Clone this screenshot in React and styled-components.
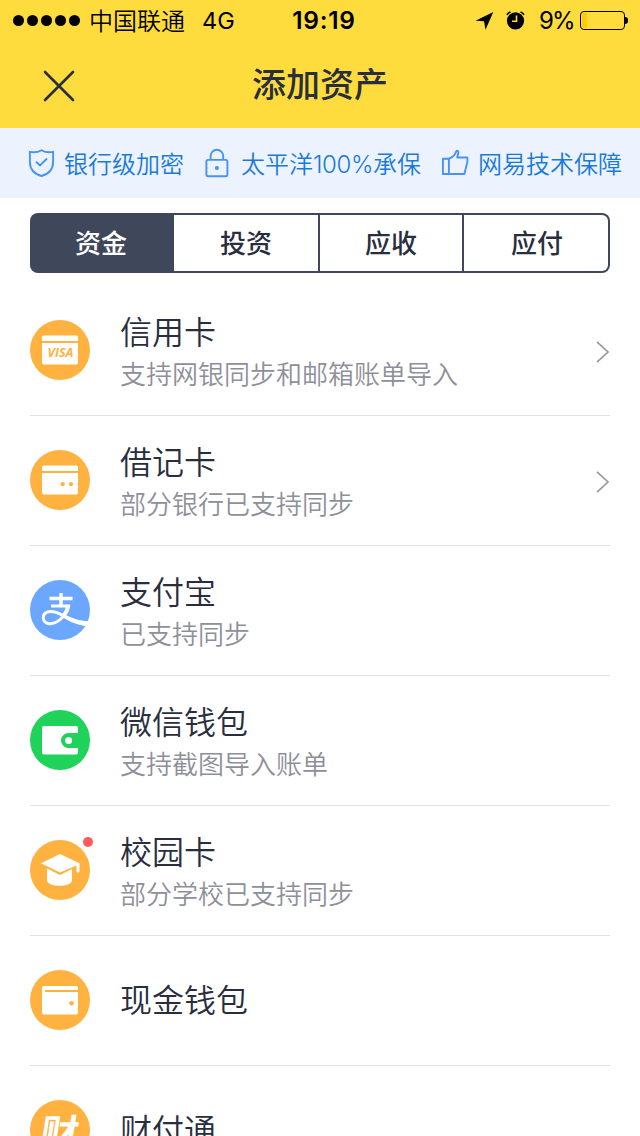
import React from "react";
import styled, { createGlobalStyle } from "styled-components";

const GlobalStyle = createGlobalStyle`
  * { box-sizing: border-box; }
  body {
    margin: 0;
    background: #fff;
    color: #292e3e;
    font-family: "Noto Sans CJK SC", sans-serif;
  }
  svg { display: block; flex: none; }
`;

const Screen = styled.div`
  width: 640px;
  height: 1136px;
  overflow: hidden;
  display: flex;
  flex-direction: column;
  background: #fff;
`;

const Header = styled.header`
  flex: none;
  height: 128px;
  background: #ffdc3e;
`;

const StatusBar = styled.div`
  display: grid;
  grid-template-columns: 1fr auto 1fr;
  align-items: center;
  height: 40px;
  padding: 0 11px 0 13px;
  color: #000;
`;

const StatusGroup = styled.div`
  display: flex;
  align-items: center;
  justify-content: ${(p) => (p.$end ? "flex-end" : "flex-start")};
`;

const SignalDots = styled.div`
  display: flex;
  gap: 3px;
  margin-right: 9px;
`;

const SignalDot = styled.i`
  width: 11px;
  height: 11px;
  border-radius: 50%;
  background: #000;
`;

const Carrier = styled.span`
  padding-bottom: 1px;
  font-size: 24px;
  font-weight: 350;
  line-height: 38px;
  white-space: nowrap;
`;

const Latin = styled.span`
  font-family: Inter, "Liberation Sans", sans-serif;
  font-size: ${(p) => p.$size || 24}px;
  font-weight: ${(p) => p.$weight || 400};
  letter-spacing: ${(p) => p.$track || 0}px;
  margin-left: ${(p) => p.$gap || 0}px;
  padding-top: ${(p) => p.$drop || 0}px;
  line-height: 1;
`;

const Battery = styled.div`
  position: relative;
  width: 45px;
  height: 19px;
  margin: 1px 4px 0 6px;
  padding: 1px;
  border: 1px solid #000;
  border-radius: 4px;
  &::after {
    content: "";
    position: absolute;
    right: -4px;
    top: 5px;
    width: 3px;
    height: 7px;
    border-radius: 0 3px 3px 0;
    background: #000;
  }
`;

const BatteryLevel = styled.div`
  width: 5px;
  height: 100%;
  border-radius: 2px 0 0 2px;
  background: #ffcc00;
`;

const NavBar = styled.div`
  display: grid;
  grid-template-columns: 118px 1fr 118px;
  align-items: center;
  height: 88px;
`;

const CloseButton = styled.button`
  justify-self: center;
  padding: 4px 0 0;
  border: 0;
  background: none;
`;

const Title = styled.h1`
  margin: 0;
  padding-bottom: 2px;
  text-align: center;
  font-size: 34px;
  line-height: 50px;
  font-weight: 500;
`;

const Assurance = styled.div`
  flex: none;
  display: flex;
  height: 70px;
  padding-left: 27px;
  background: #ecf3ff;
  color: #1a7ad9;
`;

const AssuranceItem = styled.div`
  display: flex;
  align-items: center;
  gap: ${(p) => p.$gap || 9}px;
  margin-right: ${(p) => p.$after || 0}px;
  font-size: 24px;
  font-weight: 350;
  line-height: 70px;
  white-space: nowrap;
`;

const Tabs = styled.div`
  flex: none;
  display: grid;
  grid-template-columns: 144px 146px 144px 146px;
  height: 60px;
  margin: 15px 30px 13px;
`;

const Tab = styled.button`
  padding: 0 0 2px 0;
  border: 2px solid #3f475b;
  border-left: 0;
  background: ${(p) => (p.$active ? "#3f475b" : "#fff")};
  color: ${(p) => (p.$active ? "#fff" : "#292e3e")};
  font: 500 26px/54px "Noto Sans CJK SC", sans-serif;
  &:first-child { border-radius: 8px 0 0 8px; }
  &:last-child { border-radius: 0 8px 8px 0; padding-left: 2px; }
`;

const List = styled.ul`
  list-style: none;
  margin: 0;
  padding: 0 30px;
`;

const Row = styled.li`
  display: flex;
  align-items: flex-start;
  height: 130px;
  border-bottom: 1px solid #e2e2e4;
`;

const IconSlot = styled.div`
  position: relative;
  margin: 34px 30px 0 0;
`;

const Badge = styled.i`
  position: absolute;
  right: -3px;
  top: -3px;
  width: 10px;
  height: 10px;
  border-radius: 50%;
  background: #ff5959;
`;

const Texts = styled.div`
  flex: 1;
  padding-top: ${(p) => (p.$single ? 38 : 20)}px;
`;

const Name = styled.div`
  font-size: 32px;
  line-height: 48px;
  font-weight: 350;
`;

const Note = styled.div`
  padding-top: 1px;
  font-size: 26px;
  line-height: 36px;
  font-weight: 350;
  color: #8e9099;
`;

const Chevron = styled.svg`
  align-self: center;
  margin-top: 2px;
`;

const Disc = ({ color, children }) => (
  <svg width="60" height="60" viewBox="0 0 60 60">
    <circle cx="30" cy="30" r="30" fill={color} />
    {children}
  </svg>
);

const ORANGE = "#ffb240";

const CardTop = () => (
  <>
    <path d="M14 15.5H46Q48 15.5 48 17.5V21H12V17.5Q12 15.5 14 15.5Z" fill="#fff" />
    <path d="M12 23H48V42.5Q48 44.5 46 44.5H14Q12 44.5 12 42.5V23Z" fill="#fff" />
  </>
);

const icons = {
  credit: (
    <Disc color={ORANGE}>
      <CardTop />
      <text x="17.5" y="37.2" textLength="26" lengthAdjust="spacingAndGlyphs" fontFamily="Open Sans" fontSize="12" fontWeight="700" fontStyle="italic" fill={ORANGE}>VISA</text>
    </Disc>
  ),
  debit: (
    <Disc color={ORANGE}>
      <CardTop />
      <circle cx="32.7" cy="34.2" r="2.1" fill={ORANGE} />
      <circle cx="41" cy="34.2" r="2.1" fill={ORANGE} />
    </Disc>
  ),
  alipay: (
    <Disc color="#6ba7ff">
      <g fill="none" stroke="#fff">
        <path d="M19.5 18.5H42.5M31 13V26" strokeWidth="3.4" />
        <path d="M21 26H38.5C36.5 33 32.5 38.5 27 41.8C21.5 45 13.3 44.5 13.3 37.5C13.3 32.5 19 30 26 32.4C34 35.2 43 42 57.5 43.6" strokeWidth="2.9" />
        <path d="M38.5 25.5C37.5 30 36 33 33.6 36" strokeWidth="4" />
      </g>
      <path d="M33 34.2C42 38.5 49 41 58.8 41L56.6 46C48 45 41 42.5 33 37.4Z" fill="#fff" />
    </Disc>
  ),
  wechat: (
    <Disc color="#1fd35a">
      <path d="M14 16H46Q48 16 48 18V23H38.5A7.5 7.5 0 0 0 38.5 38H48V42.5Q48 44.5 46 44.5H14Q12 44.5 12 42.5V18Q12 16 14 16Z" fill="#fff" />
      <circle cx="38.6" cy="30.6" r="3.5" fill="#fff" />
    </Disc>
  ),
  campus: (
    <Disc color={ORANGE}>
      <path d="M30 14L49.5 23.3V31.5Q49.5 32.5 48 32.5T46.5 31.5V25.5L30 32.5L11 23.3Z" fill="#fff" />
      <path d="M17 28.6L30 35L42 28.9V41Q40 45.8 29.5 45.8T17 41Z" fill="#fff" />
    </Disc>
  ),
  cash: (
    <Disc color={ORANGE}>
      <rect x="12" y="16" width="36" height="28.6" rx="2" fill="#fff" />
      <rect x="15" y="20" width="33" height="2" fill={ORANGE} />
      <circle cx="41.5" cy="33.2" r="2.3" fill={ORANGE} />
    </Disc>
  ),
  tenpay: (
    <Disc color={ORANGE}>
      <text transform="translate(8.5 46.5) skewX(-9)" fontFamily="Noto Sans CJK SC" fontSize="38" fontWeight="700" fill="#fff">财</text>
    </Disc>
  ),
};

const assets = [
  { icon: "credit", name: "信用卡", note: "支持网银同步和邮箱账单导入", more: true },
  { icon: "debit", name: "借记卡", note: "部分银行已支持同步", more: true },
  { icon: "alipay", name: "支付宝", note: "已支持同步" },
  { icon: "wechat", name: "微信钱包", note: "支持截图导入账单" },
  { icon: "campus", name: "校园卡", note: "部分学校已支持同步", isNew: true },
  { icon: "cash", name: "现金钱包" },
  { icon: "tenpay", name: "财付通" },
];

const ShieldIcon = () => (
  <svg width="28" height="30" viewBox="0 0 28 30" fill="none" stroke="#4793f2" strokeWidth="1.9">
    <path d="M14.5 2.2C11 4.3 7 4.7 2.9 3.9V14C2.9 21.5 7.5 26 14.5 28C21.5 26 26.1 21.5 26.1 14V3.9C22 4.7 18 4.3 14.5 2.2Z" />
    <path d="M9 13.8L13 17.5L20 10.5" />
  </svg>
);

const LockIcon = () => (
  <svg width="28" height="30" viewBox="0 0 28 30" fill="none" stroke="#4793f2" strokeWidth="1.9">
    <rect x="3.4" y="11.9" width="21" height="16.3" rx="1.6" />
    <path d="M7.6 12V8.1A6.3 6.3 0 0 1 20.2 8.1V12" />
    <circle cx="13.9" cy="20" r="2.1" fill="#4793f2" stroke="none" />
  </svg>
);

const ThumbIcon = () => (
  <svg width="28" height="30" viewBox="0 0 28 30" fill="none" stroke="#4793f2" strokeWidth="1.9" strokeLinejoin="round">
    <path d="M1.9 10.7H7.9V26H1.9Z" />
    <path d="M7.9 10.7C12.3 9 14.3 6.5 15 3.8C15.5 2.3 17.7 2.3 17.4 4.6L16.2 9.5H26.4V13.8L23.4 26H7.9" />
  </svg>
);

export default function App() {
  return (
    <Screen>
      <GlobalStyle />
      <Header>
        <StatusBar>
          <StatusGroup>
            <SignalDots>
              {[0, 1, 2, 3, 4].map((n) => <SignalDot key={n} />)}
            </SignalDots>
            <Carrier>中国联通</Carrier>
            <Latin $gap={17} $size={23.5} $drop={1}>4G</Latin>
          </StatusGroup>
          <Latin $weight={600} $size={24.5} $track={0.7} $gap={6} $drop={1}>19:19</Latin>
          <StatusGroup $end>
            <svg width="50" height="24" viewBox="0 0 50 24">
              <path d="M0.5 12.7L18.3 4L10.5 21.7L9 13.3Z" />
              <circle cx="40.5" cy="12.8" r="8.6" />
              <path d="M32 7Q33 4.7 35.5 4M45.5 4Q48 4.7 49 7" fill="none" stroke="#000" strokeWidth="1.5" />
              <path d="M41.5 7.5V13.3H37" fill="none" stroke="#ffdc3e" strokeWidth="1.6" />
            </svg>
            <Latin $gap={14} $track={-1.7} $drop={1}>9%</Latin>
            <Battery><BatteryLevel /></Battery>
          </StatusGroup>
        </StatusBar>
        <NavBar>
          <CloseButton aria-label="关闭">
            <svg width="32" height="32" viewBox="0 0 32 32" stroke="#292e3e" strokeWidth="2.6" strokeLinecap="round">
              <path d="M2 2L30 30M30 2L2 30" />
            </svg>
          </CloseButton>
          <Title>添加资产</Title>
        </NavBar>
      </Header>
      <Assurance>
        <AssuranceItem $after={19}><ShieldIcon />银行级加密</AssuranceItem>
        <AssuranceItem $after={20} $gap={10}><LockIcon /><span>太平洋<Latin $track={-0.4} $weight={350}>100%</Latin>承保</span></AssuranceItem>
        <AssuranceItem><ThumbIcon />网易技术保障</AssuranceItem>
      </Assurance>
      <Tabs>
        <Tab $active>资金</Tab>
        <Tab>投资</Tab>
        <Tab>应收</Tab>
        <Tab>应付</Tab>
      </Tabs>
      <List>
        {assets.map((a) => (
          <Row key={a.name}>
            <IconSlot>
              {icons[a.icon]}
              {a.isNew && <Badge />}
            </IconSlot>
            <Texts $single={!a.note}>
              <Name>{a.name}</Name>
              {a.note && <Note>{a.note}</Note>}
            </Texts>
            {a.more && (
              <Chevron width="14" height="22" viewBox="0 0 14 22" fill="none" stroke="#999" strokeWidth="1.7">
                <path d="M1 0.8L12 11L1 21.2" />
              </Chevron>
            )}
          </Row>
        ))}
      </List>
    </Screen>
  );
}
